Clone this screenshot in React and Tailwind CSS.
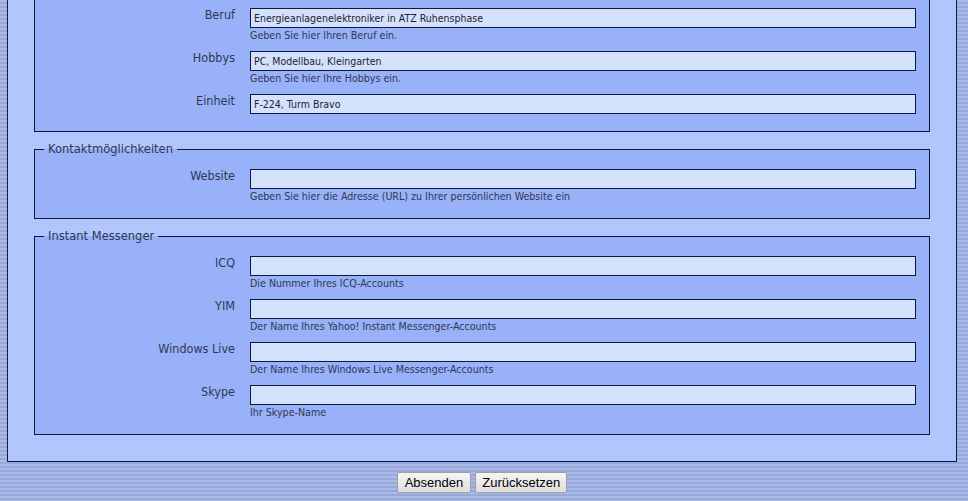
import React from "react";

// Profil bearbeiten – untere Hälfte des Formulars mit den Abschnitten
// Persönliches (ausgeschnitten), Kontaktmöglichkeiten und Instant Messenger.

const font = "font-['DejaVu_Sans_Condensed','DejaVu_Sans',sans-serif]";

const Field = ({ label, value = "", hint }) => (
  <div className="grid grid-cols-[187px_1fr] gap-x-[15px]">
    <label className="text-right text-[12.5px] leading-[14px] text-[#2f3850]">
      {label}
    </label>
    <div>
      <input
        type="text"
        defaultValue={value}
        className="block w-full h-[20px] px-[3px] bg-[#d4e1fa] border border-[#0b1a40] text-[10.5px] text-[#1b2235] outline-none"
      />
      {hint && (
        <p className="text-[10.6px] leading-[13px] text-[#2f3850] mt-[1px]">{hint}</p>
      )}
    </div>
  </div>
);

const Section = ({ title, children, className = "" }) => (
  <fieldset
    className={`border border-[#0b1a40] bg-[#98b1f9] pl-[13px] pr-[13px] ${className}`}
  >
    {title && (
      <legend className="px-[4px] ml-[-4px] text-[12.8px] leading-[14px] text-[#2f3850]">
        {title}
      </legend>
    )}
    <div className="flex flex-col gap-[9px]">{children}</div>
  </fieldset>
);

export default function App() {
  return (
    <div
      className={`${font} min-h-screen bg-[repeating-linear-gradient(to_bottom,#aab9e6_0px,#aab9e6_2px,#97a8da_2px,#97a8da_4px)]`}
    >
      <div className="ml-[7px] w-[950px] bg-[#b1c6fd] border border-t-0 border-[#0b1a40] px-[26px] pb-[26px]">
        <Section className="border-t-0 pt-[8px] pb-[17px]">
          <Field
            label="Beruf"
            value="Energieanlagenelektroniker in ATZ Ruhensphase"
            hint="Geben Sie hier Ihren Beruf ein."
          />
          <Field
            label="Hobbys"
            value="PC, Modellbau, Kleingarten"
            hint="Geben Sie hier Ihre Hobbys ein."
          />
          <Field label="Einheit" value="F-224, Turm Bravo" />
        </Section>

        <Section title="Kontaktmöglichkeiten" className="mt-[10px] pt-[13px] pb-[15px]">
          <Field
            label="Website"
            hint="Geben Sie hier die Adresse (URL) zu Ihrer persönlichen Website ein"
          />
        </Section>

        <Section title="Instant Messenger" className="mt-[10px] pt-[13px] pb-[15px]">
          <Field label="ICQ" hint="Die Nummer Ihres ICQ-Accounts" />
          <Field label="YIM" hint="Der Name Ihres Yahoo! Instant Messenger-Accounts" />
          <Field
            label="Windows Live"
            hint="Der Name Ihres Windows Live Messenger-Accounts"
          />
          <Field label="Skype" hint="Ihr Skype-Name" />
        </Section>
      </div>

      <div className="ml-[7px] w-[950px] flex justify-center gap-[4px] pt-[10px] pb-[9px] font-['Liberation_Sans',Arial,sans-serif]">
        <button
          type="submit"
          className="h-[21px] px-[7px] text-[13px] leading-[19px] text-black bg-gradient-to-b from-[#f6f6f6] to-[#dedede] border border-[#a0a0a0] rounded-[2px]"
        >
          Absenden
        </button>
        <button
          type="reset"
          className="h-[21px] px-[6px] text-[13px] leading-[19px] text-black bg-gradient-to-b from-[#f6f6f6] to-[#dedede] border border-[#a0a0a0] rounded-[2px]"
        >
          Zurücksetzen
        </button>
      </div>
    </div>
  );
}
